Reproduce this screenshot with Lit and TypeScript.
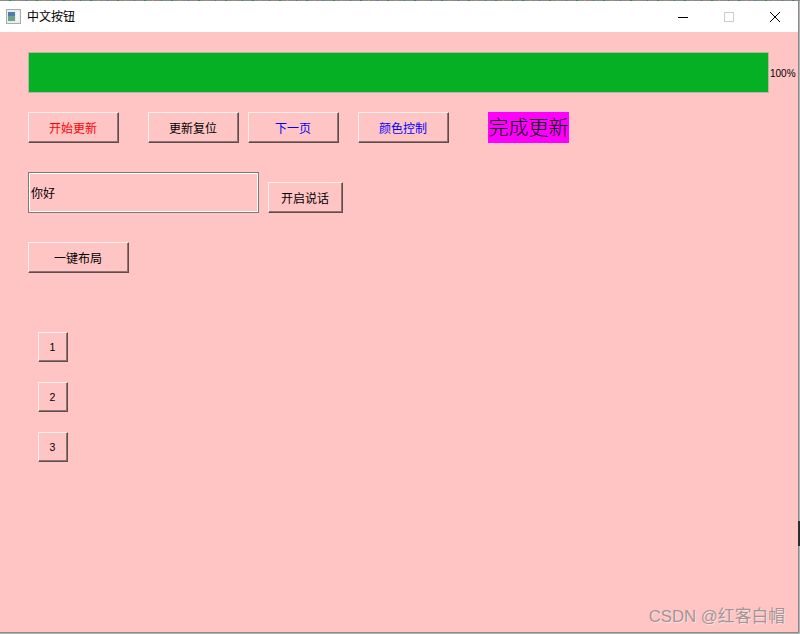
import { LitElement, html, css } from "lit";
import { customElement } from "lit/decorators.js";

@customElement("app-root")
export class AppRoot extends LitElement {
  static styles = css`
    :host {
      display: block;
      width: 800px;
      height: 634px;
      background: #b4b4b4;
      overflow: hidden;
      position: relative;
      font-family: "Noto Sans CJK SC", "Liberation Sans", sans-serif;
      font-size: 12px;
      color: #000;
    }
    .specks {
      height: 1px;
      background: repeating-linear-gradient(
        90deg,
        #8a8a8a 0 9px,
        #2f8f3f 9px 11px,
        #8a8a8a 11px 17px,
        #c9a63a 17px 18px,
        #8a8a8a 18px 26px,
        #2b7f9a 26px 27px
      );
    }
    .edge {
      position: absolute;
      top: 521px;
      right: 0;
      width: 2px;
      height: 25px;
      background: #2e2e2e;
    }
    .window {
      box-sizing: border-box;
      width: 799px;
      height: 632px;
      border-right: 1px solid #8a8a8a;
      border-bottom: 1px solid #8a8a8a;
      display: flex;
      flex-direction: column;
    }
    .titlebar {
      height: 31px;
      flex: none;
      background: #fff;
      display: flex;
      align-items: center;
      padding-left: 6px;
    }
    .app-icon { width: 15px; height: 15px; flex: none; }
    .title { margin-left: 6px; line-height: 16px; position: relative; top: -1px; }
    .controls { margin-left: auto; display: flex; }
    .ctrl {
      width: 46px;
      height: 31px;
      display: flex;
      align-items: center;
      justify-content: center;
    }
    .ctrl svg { width: 12px; height: 12px; display: block; }
    .client {
      flex: 1;
      background: #ffc5c5;
      padding: 20px 0 0 28px;
      display: flex;
      flex-direction: column;
      align-items: flex-start;
      position: relative;
    }
    .progress-row { display: flex; align-items: center; height: 41px; }
    .progress {
      box-sizing: border-box;
      width: 741px;
      height: 41px;
      background: #06b025;
      border: 1px solid #b5b5a8;
    }
    .pct {
      margin-left: 1px;
      padding-top: 1px;
      font-family: "Liberation Sans", sans-serif;
      font-size: 10px;
      white-space: nowrap;
    }
    .btn {
      box-sizing: border-box;
      margin: 0;
      padding: 0 1px 0 0;
      height: 31px;
      width: 91px;
      flex: none;
      background: #ffc5c5;
      font: inherit;
      color: #000;
      border-style: solid;
      border-width: 1px;
      border-color: #fff0f0 #5f4c4c #5f4c4c #fff0f0;
      box-shadow: inset -1px -1px 0 #8f7474;
      display: flex;
      align-items: center;
      justify-content: center;
      line-height: 16px;
    }
    .red { color: #ff0000; }
    .blue { color: #0000ff; }
    .toolbar { display: flex; margin-top: 19px; }
    .ml29 { margin-left: 29px; }
    .ml9 { margin-left: 9px; }
    .ml19 { margin-left: 19px; }
    .done {
      margin-left: 39px;
      width: 81px;
      height: 31px;
      background: #ff00ff;
      font-size: 20px;
      line-height: 29px;
      text-align: center;
      white-space: nowrap;
      font-weight: 300;
    }
    .speak-row { display: flex; align-items: flex-end; margin-top: 29px; }
    .field {
      box-sizing: border-box;
      width: 231px;
      height: 41px;
      margin: 0;
      padding: 0 0 1px 2px;
      background: #ffc5c5;
      border: 1px solid #7a7a7a;
      outline: 1px solid #fff;
      outline-offset: -2px;
      font: inherit;
      color: #000;
    }
    .speak { width: 75px; margin-left: 9px; }
    .layout { width: 101px; margin-top: 29px; }
    .numbers {
      display: flex;
      flex-direction: column;
      gap: 20px;
      margin: 59px 0 0 10px;
    }
    .num {
      width: 30px;
      height: 30px;
      font-family: "Liberation Sans", sans-serif;
      font-size: 10.5px;
    }
    .watermark {
      position: absolute;
      right: 13px;
      bottom: 4px;
      font-family: "Liberation Sans", "Noto Sans CJK SC", sans-serif;
      font-size: 16.8px;
      line-height: 22px;
      color: #a89292;
      text-shadow: 1px 1px 0 #f2e4e4;
      white-space: nowrap;
    }
  `;

  render() {
    return html`
      <div class="specks"></div>
      <div class="edge"></div>
      <div class="window">
        <div class="titlebar">
          <svg class="app-icon" viewBox="0 0 15 15">
            <rect x="0.5" y="0.5" width="14" height="14" fill="#e8ecec" stroke="#a8acb0" />
            <rect x="2" y="3" width="7" height="9" fill="#6f9f8f" />
            <rect x="2" y="3" width="7" height="4" fill="#4c7fa8" />
            <rect x="10" y="3" width="3" height="9" fill="#f4f6f4" />
          </svg>
          <span class="title">中文按钮</span>
          <div class="controls">
            <div class="ctrl">
              <svg viewBox="0 0 12 12"><path d="M1 6.5H11" stroke="#000" fill="none" /></svg>
            </div>
            <div class="ctrl">
              <svg viewBox="0 0 12 12"><rect x="1.5" y="1.5" width="9" height="9" stroke="#cccccc" fill="none" /></svg>
            </div>
            <div class="ctrl">
              <svg viewBox="0 0 12 12"><path d="M1 1L11 11M11 1L1 11" stroke="#000" fill="none" /></svg>
            </div>
          </div>
        </div>
        <div class="client">
          <div class="progress-row">
            <div class="progress"></div>
            <span class="pct">100%</span>
          </div>
          <div class="toolbar">
            <button class="btn red">开始更新</button>
            <button class="btn ml29">更新复位</button>
            <button class="btn blue ml9">下一页</button>
            <button class="btn blue ml19">颜色控制</button>
            <div class="done">完成更新</div>
          </div>
          <div class="speak-row">
            <input class="field" .value=${"你好"} />
            <button class="btn speak">开启说话</button>
          </div>
          <button class="btn layout">一键布局</button>
          <div class="numbers">
            <button class="btn num">1</button>
            <button class="btn num">2</button>
            <button class="btn num">3</button>
          </div>
          <div class="watermark">CSDN @红客白帽</div>
        </div>
      </div>
    `;
  }
}
